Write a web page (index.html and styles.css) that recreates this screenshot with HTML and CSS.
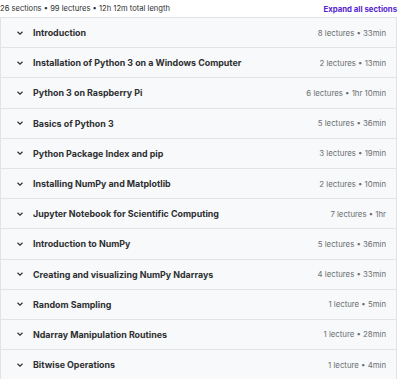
FILE: index.html
```html
<!DOCTYPE html>
<html lang="en">
<head>
    <meta charset="UTF-8">
    <meta name="viewport" content="width=device-width, initial-scale=1.0">
    <title>Course content</title>
    <link rel="stylesheet" href="styles.css">
</head>
<body>
    <div class="curriculum">
        <div class="summary">
            <span>26 sections • 99 lectures • 12h 12m total length</span>
            <button class="expand-all">Expand all sections</button>
        </div>
        <div class="sections">
            <div class="section"><span class="chevron"><svg viewBox="0 0 10 10"><path d="M2.5 3.8 5 6.2 7.5 3.8"/></svg></span><span class="title">Introduction</span><span class="meta">8 lectures • 33min</span></div>
            <div class="section"><span class="chevron"><svg viewBox="0 0 10 10"><path d="M2.5 3.8 5 6.2 7.5 3.8"/></svg></span><span class="title">Installation of Python 3 on a Windows Computer</span><span class="meta">2 lectures • 13min</span></div>
            <div class="section"><span class="chevron"><svg viewBox="0 0 10 10"><path d="M2.5 3.8 5 6.2 7.5 3.8"/></svg></span><span class="title">Python 3 on Raspberry Pi</span><span class="meta">6 lectures • 1hr 10min</span></div>
            <div class="section"><span class="chevron"><svg viewBox="0 0 10 10"><path d="M2.5 3.8 5 6.2 7.5 3.8"/></svg></span><span class="title">Basics of Python 3</span><span class="meta">5 lectures • 36min</span></div>
            <div class="section"><span class="chevron"><svg viewBox="0 0 10 10"><path d="M2.5 3.8 5 6.2 7.5 3.8"/></svg></span><span class="title">Python Package Index and pip</span><span class="meta">3 lectures • 19min</span></div>
            <div class="section"><span class="chevron"><svg viewBox="0 0 10 10"><path d="M2.5 3.8 5 6.2 7.5 3.8"/></svg></span><span class="title">Installing NumPy and Matplotlib</span><span class="meta">2 lectures • 10min</span></div>
            <div class="section"><span class="chevron"><svg viewBox="0 0 10 10"><path d="M2.5 3.8 5 6.2 7.5 3.8"/></svg></span><span class="title">Jupyter Notebook for Scientific Computing</span><span class="meta">7 lectures • 1hr</span></div>
            <div class="section"><span class="chevron"><svg viewBox="0 0 10 10"><path d="M2.5 3.8 5 6.2 7.5 3.8"/></svg></span><span class="title">Introduction to NumPy</span><span class="meta">5 lectures • 36min</span></div>
            <div class="section"><span class="chevron"><svg viewBox="0 0 10 10"><path d="M2.5 3.8 5 6.2 7.5 3.8"/></svg></span><span class="title">Creating and visualizing NumPy Ndarrays</span><span class="meta">4 lectures • 33min</span></div>
            <div class="section"><span class="chevron"><svg viewBox="0 0 10 10"><path d="M2.5 3.8 5 6.2 7.5 3.8"/></svg></span><span class="title">Random Sampling</span><span class="meta">1 lecture • 5min</span></div>
            <div class="section"><span class="chevron"><svg viewBox="0 0 10 10"><path d="M2.5 3.8 5 6.2 7.5 3.8"/></svg></span><span class="title">Ndarray Manipulation Routines</span><span class="meta">1 lecture • 28min</span></div>
            <div class="section"><span class="chevron"><svg viewBox="0 0 10 10"><path d="M2.5 3.8 5 6.2 7.5 3.8"/></svg></span><span class="title">Bitwise Operations</span><span class="meta">1 lecture • 4min</span></div>
        </div>
    </div>
</body>
</html>
```

FILE: styles.css
```css
:root {
    --text-color: #2d2f31;
    --muted-color: #6a6f73;
    --border-color: #e0e4e7;
    --row-color: #f8f9fa;
    --accent-color: #5624d0;
}

body {
    margin: 0;
    padding: 0;
    background-color: #fff;
    color: var(--text-color);
    font-family: Inter, 'Noto Sans', sans-serif;
}

.curriculum {
    width: 397px;
}

.summary {
    display: flex;
    justify-content: space-between;
    align-items: center;
    height: 17px;
    font-size: 7.6px;
    color: var(--text-color);
}

.expand-all {
    background: none;
    border: none;
    padding: 0;
    font-family: inherit;
    font-size: 7.8px;
    font-weight: 700;
    color: var(--accent-color);
    cursor: pointer;
}

.sections {
    border: 1px solid var(--border-color);
    border-bottom: none;
}

.section {
    display: flex;
    align-items: center;
    height: 29.2px;
    padding: 0 10px 0 14px;
    background-color: var(--row-color);
    border-bottom: 1px solid var(--border-color);
}

.chevron {
    display: flex;
    width: 10px;
    height: 10px;
    margin-right: 8px;
}

.chevron svg {
    width: 10px;
    height: 10px;
    fill: none;
    stroke: var(--text-color);
    stroke-width: 1.2;
}

.title {
    flex: 1;
    font-size: 8.9px;
    font-weight: 700;
}

.meta {
    font-size: 7.8px;
    color: var(--muted-color);
}
```
